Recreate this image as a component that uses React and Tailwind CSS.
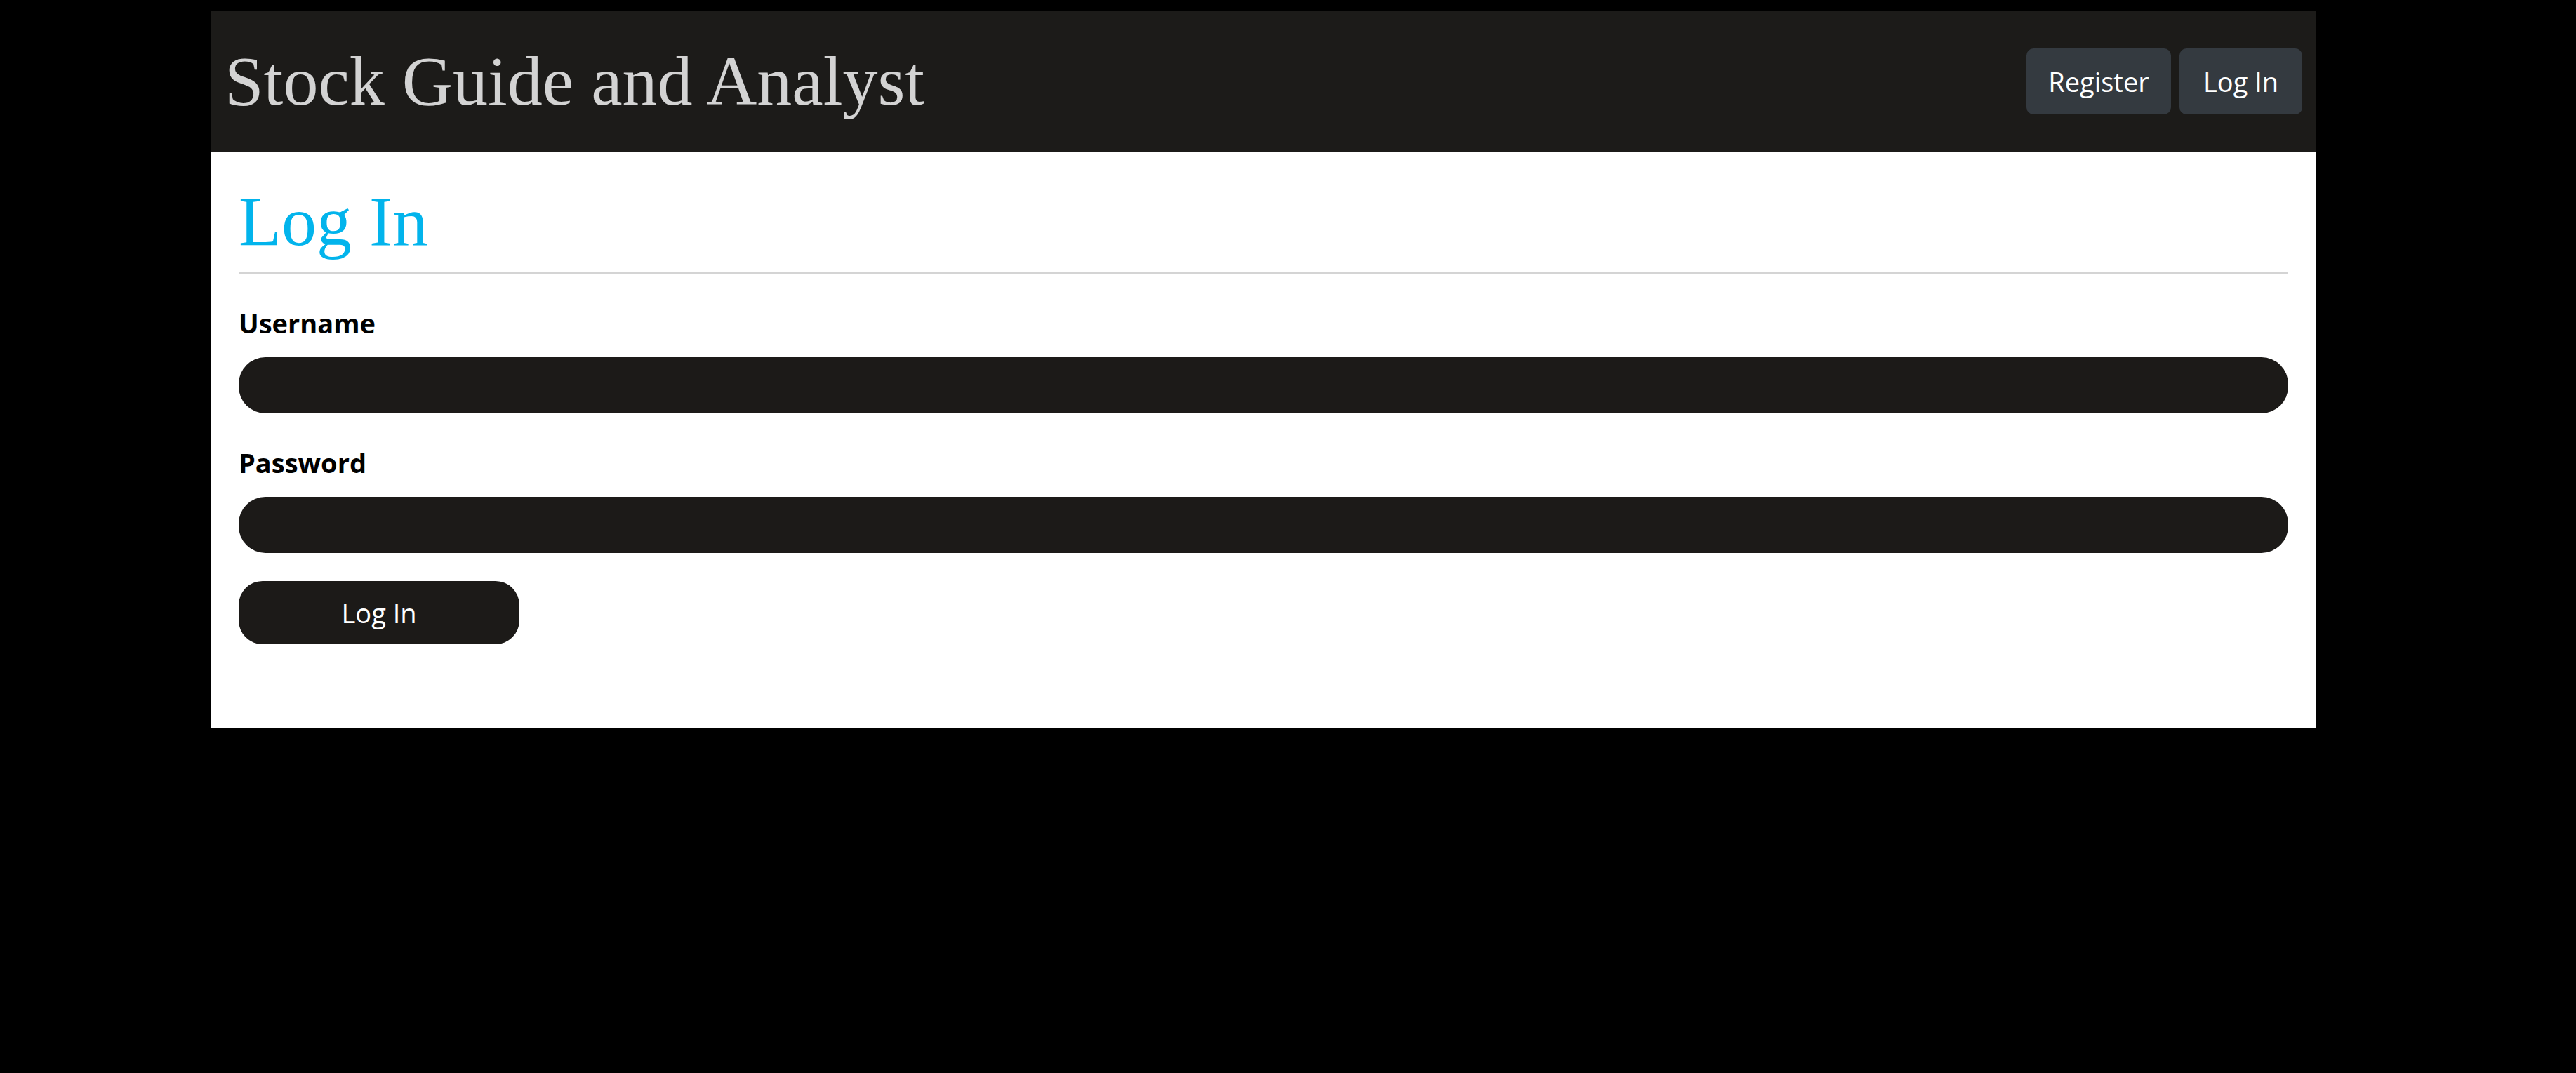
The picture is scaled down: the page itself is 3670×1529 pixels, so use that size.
export default function App() {
  const sans = { fontFamily: '"Open Sans", "Noto Sans", sans-serif' };
  return (
    <div className="min-h-[1529px] w-full bg-black pt-[16px]">
      <div className="ml-[300px] w-[3000px]">
        <header className="flex h-[200px] items-center justify-between bg-[#1c1b19] px-[20px]">
          <h1
            className="text-[100px] leading-none font-normal text-[#d3d3d3]"
            style={{ fontFamily: '"Liberation Serif", "Times New Roman", serif' }}
          >
            Stock Guide and Analyst
          </h1>
          <nav className="flex items-center gap-[12px]" style={sans}>
            <button className="flex h-[94px] w-[206px] items-center justify-center rounded-[10px] bg-[#343a40] text-[38px] text-white">
              Register
            </button>
            <button className="flex h-[94px] w-[175px] items-center justify-center rounded-[10px] bg-[#343a40] text-[38px] text-white">
              Log In
            </button>
          </nav>
        </header>
        <main className="bg-white px-[40px] pt-[50px] pb-[120px]">
          <h2
            className="border-b-2 border-[#d4d4d4] pb-[22px] text-[100px] leading-none font-normal text-[#02b4ec]"
            style={{ fontFamily: '"Liberation Serif", "Times New Roman", serif' }}
          >
            Log In
          </h2>
          <form className="pt-[40px]" style={sans} onSubmit={(e) => e.preventDefault()}>
            <div className="mb-[40px]">
              <label className="mb-[19px] block text-[38px] leading-[60px] font-bold text-black">Username</label>
              <input type="text" className="block h-[80px] w-full rounded-[38px] bg-[#1c1a18] px-[30px] text-[38px] text-white outline-none" />
            </div>
            <div className="mb-[40px]">
              <label className="mb-[19px] block text-[38px] leading-[60px] font-bold text-black">Password</label>
              <input type="password" className="block h-[80px] w-full rounded-[38px] bg-[#1c1a18] px-[30px] text-[38px] text-white outline-none" />
            </div>
            <button type="submit" className="flex h-[90px] w-[400px] items-center justify-center rounded-[34px] bg-[#1c1a18] text-[38px] text-white">
              Log In
            </button>
          </form>
        </main>
      </div>
    </div>
  );
}
